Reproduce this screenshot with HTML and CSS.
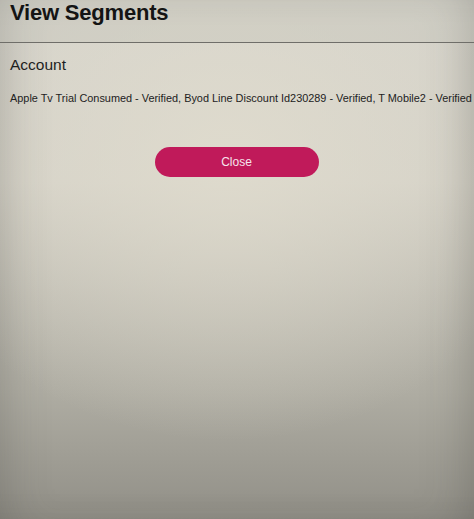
FILE: index.html
```html
<!DOCTYPE html>
<html lang="en">
<head>
    <meta charset="UTF-8">
    <meta name="viewport" content="width=device-width, initial-scale=1.0">
    <title>View Segments</title>
    <link rel="stylesheet" href="styles.css">
</head>
<body>
    <div class="modal">
        <!-- Modal header -->
        <div class="modal-header">
            <h1>View Segments</h1>
        </div>

        <!-- Segment list -->
        <div class="modal-body">
            <h2>Account</h2>
            <p class="segments">Apple Tv Trial Consumed - Verified, Byod Line Discount Id230289 - Verified, T Mobile2 - Verified</p>
            <div class="button-container">
                <button type="button" class="close-button">Close</button>
            </div>
        </div>
    </div>
</body>
</html>
```

FILE: styles.css
```css
/* Global Styles */
html, body {
    height: 100%;
}

body {
    font-family: 'Liberation Sans', Arial, sans-serif;
    color: #1c1c1c;
    margin: 0;
    padding: 0;
    background-color: #b9b6ab;
    background-image:
        radial-gradient(ellipse 70% 55% at 48% 30%, rgba(224, 220, 206, 0.85), rgba(224, 220, 206, 0) 100%),
        linear-gradient(to bottom, #d6d4cc 0%, #d4d1c7 35%, #afada3 75%, #918f87 100%);
    overflow: hidden;
}

.modal {
    height: 100%;
    box-shadow: inset 30px 0 50px -30px rgba(60, 60, 55, 0.3), inset -30px 0 50px -30px rgba(60, 60, 55, 0.35);
}

.modal-header {
    padding: 0 10px;
    height: 42px;
    border-bottom: 1px solid #6f6e69;
    background-color: rgba(190, 188, 180, 0.3);
}

h1 {
    margin: 0;
    font-size: 22px;
    font-weight: bold;
    line-height: 26px;
    letter-spacing: -0.2px;
    color: #141414;
}

.modal-body {
    padding: 12px 10px 0 10px;
}

h2 {
    margin: 0;
    font-size: 15.5px;
    font-weight: normal;
    line-height: 20px;
    color: #1e1e1e;
}

.segments {
    margin: 16px 0 0 0;
    font-size: 10.9px;
    line-height: 14px;
    white-space: nowrap;
    color: #222;
}

.button-container {
    display: flex;
    justify-content: center;
    margin-top: 42px;
    padding-right: 1px;
}

.close-button {
    width: 164px;
    height: 30px;
    border: none;
    border-radius: 15px;
    background-color: #c01a5a;
    color: #f6e4ec;
    font-family: 'Liberation Sans', Arial, sans-serif;
    font-size: 12px;
    cursor: pointer;
}
```
